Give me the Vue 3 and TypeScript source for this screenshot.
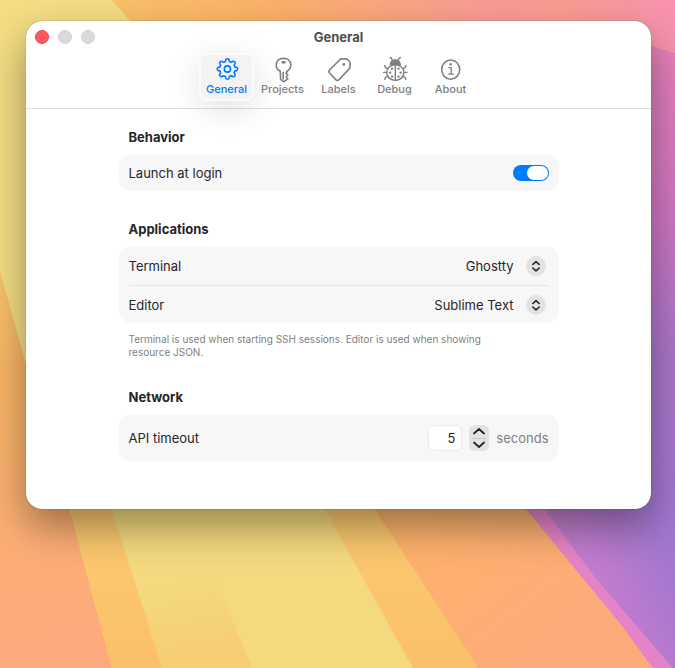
<script setup lang="ts">
import { ref } from 'vue'

type TabId = 'general' | 'projects' | 'labels' | 'debug' | 'about'

const tabs: { id: TabId; label: string }[] = [
  { id: 'general', label: 'General' },
  { id: 'projects', label: 'Projects' },
  { id: 'labels', label: 'Labels' },
  { id: 'debug', label: 'Debug' },
  { id: 'about', label: 'About' },
]

const activeTab = ref<TabId>('general')
const launchAtLogin = ref(true)
const terminal = ref('Ghostty')
const editor = ref('Sublime Text')
const timeout = ref(5)

const terminals = ['Ghostty', 'Terminal', 'iTerm']
const editors = ['Sublime Text', 'TextEdit', 'Xcode']

function step(delta: number) {
  timeout.value = Math.max(1, Number(timeout.value) + delta)
}

// Eight rounded teeth around the centre of a 28-unit icon box.
function gearPath(): string {
  const cx = 14.4
  const cy = 14
  const point = (radius: number, deg: number) => {
    const a = ((deg - 90) * Math.PI) / 180
    return `${(cx + radius * Math.cos(a)).toFixed(2)} ${(cy + radius * Math.sin(a)).toFixed(2)}`
  }
  let d = ''
  for (let i = 0; i < 8; i++) {
    const t = i * 45
    d += `${i === 0 ? 'M' : 'L'}${point(7.9, t - 14)}`
    d += `L${point(9.4, t - 10)}Q${point(10.2, t - 7)} ${point(10.2, t)}`
    d += `Q${point(10.2, t + 7)} ${point(9.4, t + 10)}L${point(7.9, t + 14)}`
    d += `Q${point(7.3, t + 22.5)} ${point(7.9, t + 31)}`
  }
  return d + 'Z'
}
const gear = gearPath()
</script>

<template>
  <div class="desktop">
    <svg class="wallpaper" viewBox="0 0 675 668" preserveAspectRatio="none" aria-hidden="true">
      <defs>
        <linearGradient id="top" x1="0" y1="0" x2="1" y2="0">
          <stop offset="0.15" stop-color="#fbc169" />
          <stop offset="0.42" stop-color="#fcb16a" />
          <stop offset="0.72" stop-color="#f99c96" />
          <stop offset="0.84" stop-color="#f99d92" />
          <stop offset="1" stop-color="#f792b0" />
        </linearGradient>
        <linearGradient id="left" gradientUnits="userSpaceOnUse" x1="0" y1="270" x2="60" y2="668">
          <stop offset="0" stop-color="#f8c469" />
          <stop offset="0.25" stop-color="#f9b566" />
          <stop offset="0.6" stop-color="#fcb071" />
          <stop offset="1" stop-color="#fda97f" />
        </linearGradient>
        <linearGradient id="right" gradientUnits="userSpaceOnUse" x1="0" y1="40" x2="0" y2="668">
          <stop offset="0" stop-color="#e681b6" />
          <stop offset="0.25" stop-color="#d277c2" />
          <stop offset="0.5" stop-color="#aa76c9" />
          <stop offset="0.8" stop-color="#a177d0" />
          <stop offset="1" stop-color="#b078d2" />
        </linearGradient>
        <linearGradient id="violet" gradientUnits="userSpaceOnUse" x1="570" y1="590" x2="665" y2="545">
          <stop offset="0" stop-color="#c77dcc" />
          <stop offset="0.4" stop-color="#be7bcd" />
          <stop offset="1" stop-color="#a177d0" />
        </linearGradient>
        <linearGradient id="band" x1="0" y1="0" x2="0" y2="1">
          <stop offset="0" stop-color="#fbcc72" />
          <stop offset="1" stop-color="#fbc069" />
        </linearGradient>
        <linearGradient id="peach" gradientUnits="userSpaceOnUse" x1="430" y1="510" x2="560" y2="668">
          <stop offset="0" stop-color="#fdb36c" />
          <stop offset="1" stop-color="#fdaa7b" />
        </linearGradient>
        <linearGradient id="glow" gradientUnits="userSpaceOnUse" x1="185" y1="580" x2="200" y2="660">
          <stop offset="0" stop-color="#f7cb70" stop-opacity="0" />
          <stop offset="1" stop-color="#f7cb70" stop-opacity="0.85" />
        </linearGradient>
      </defs>
      <rect width="675" height="668" fill="#f4d97f" />
      <path d="M0 0H675V80H0Z" fill="url(#top)" />
      <path d="M0 0H112L138 30V400H26L0 271Z" fill="#f4dd84" />
      <path d="M0 271L26 364V480H62L70 510L112 668H0Z" fill="url(#left)" />
      <path d="M62 480H103L112 510L162 668H112L70 510Z" fill="url(#band)" />
      <path d="M134 580H216L252 668H162Z" fill="url(#glow)" />
      <path d="M308 480H357L375 510L478 668H413L325 510Z" fill="url(#band)" />
      <path d="M357 480H503L527 510L620 623L653 668H478L375 510Z" fill="url(#peach)" />
      <path d="M503 480H600V46L651 46L675 53V668H653L620 623L527 510Z" fill="url(#right)" />
      <path d="M503 480H675V668L595 577L545 510L527 510Z" fill="url(#violet)" />
      <path d="M503 480H523L545 510L595 577L673 668H653L620 623L527 510Z" fill="#e583c8" />
    </svg>

    <main class="window">
      <header class="toolbar">
        <div class="titlebar">
          <div class="lights">
            <button type="button" class="light close" aria-label="Close"></button>
            <button type="button" class="light" aria-label="Minimize" disabled></button>
            <button type="button" class="light" aria-label="Zoom" disabled></button>
          </div>
          <h1>General</h1>
        </div>
        <nav class="tabs">
          <button
            v-for="tab in tabs"
            :key="tab.id"
            type="button"
            class="tab"
            :class="{ active: activeTab === tab.id }"
            @click="activeTab = tab.id"
          >
            <svg class="icon" viewBox="0 0 28 28" aria-hidden="true">
              <template v-if="tab.id === 'general'">
                <path :d="gear" />
                <circle cx="14.4" cy="14" r="3.1" />
              </template>
              <template v-else-if="tab.id === 'projects'">
                <path d="M11.3 16.3C8.8 15.2 7.2 13 7.2 10.1C7.2 6 10.1 3.4 14.5 3.4S21.8 6 21.8 10.1C21.8 12.8 20.3 15.1 17.9 16.3V17L17 18.3L18.9 20L17.1 21.8L18.8 23.6L15 26.8L11.6 24.3Z" />
                <ellipse cx="14.6" cy="7.3" rx="2.4" ry="1.4" class="solid" />
                <path d="M14.2 17.5V24" />
              </template>
              <template v-else-if="tab.id === 'labels'">
                <path d="M14.8 4.7Q15.7 3.9 16.8 3.9H20.6Q21.8 3.9 22.6 4.7L24.2 6.3Q25 7.1 25 8.3V11.8Q25 13 24.2 13.9L14 24.6Q12.4 26.2 10.8 24.6L4.6 18Q3.2 16.4 4.8 14.8Z" />
                <circle cx="18.8" cy="9.4" r="1.4" class="solid" />
              </template>
              <template v-else-if="tab.id === 'debug'">
                <path d="M8.6 10.6C8.6 6.8 10.6 4.2 14.3 4.2S20 6.8 20 10.6Q14.3 8.8 8.6 10.6Z" class="solid" />
                <path d="M11.3 5.4L10.6 3.4L9.2 2.6M17.3 5.4L18 3.4L19.4 2.6" class="thin" />
                <ellipse cx="14.3" cy="17.6" rx="8.6" ry="7.8" class="thin" />
                <path d="M14.3 10V25.5M6.6 13.6L4.5 12.6L3.6 10.4M22 13.6L24.1 12.6L25 10.4M5.7 17.4H2.6M22.9 17.4H26M7 21.4L4.6 22.3L3.8 24.4M21.6 21.4L24 22.3L24.8 24.4" class="thin" />
                <g class="solid">
                  <circle cx="11.1" cy="13.6" r="1.2" />
                  <circle cx="17.5" cy="13.6" r="1.2" />
                  <circle cx="9" cy="17.6" r="1.2" />
                  <circle cx="19.6" cy="17.6" r="1.2" />
                  <circle cx="11.1" cy="21.6" r="1.2" />
                  <circle cx="17.5" cy="21.6" r="1.2" />
                </g>
              </template>
              <template v-else>
                <ellipse cx="13.7" cy="14.6" rx="9" ry="9.6" />
                <circle cx="13.6" cy="9.3" r="1.3" class="solid" />
                <path d="M11.9 12.6H14.2V18.9M11.6 19.1H16.6" class="thin" />
              </template>
            </svg>
            <span>{{ tab.label }}</span>
          </button>
        </nav>
      </header>

      <form class="settings" @submit.prevent>
        <section>
          <h2>Behavior</h2>
          <div class="card">
            <div class="row">
              <label for="launch">Launch at login</label>
              <input id="launch" v-model="launchAtLogin" type="checkbox" role="switch" class="switch" />
            </div>
          </div>
        </section>

        <section>
          <h2>Applications</h2>
          <div class="card">
            <div class="row picker-row">
              <label for="terminal">Terminal</label>
              <div class="picker">
                <select id="terminal" v-model="terminal">
                  <option v-for="name in terminals" :key="name">{{ name }}</option>
                </select>
                <svg class="chevrons" viewBox="0 0 20 20" aria-hidden="true">
                  <circle cx="10" cy="10" r="10" />
                  <path d="M6.8 8.5L10 5.6L13.2 8.5M6.8 12L10 14.9L13.2 12" />
                </svg>
              </div>
            </div>
            <div class="row picker-row">
              <label for="editor">Editor</label>
              <div class="picker">
                <select id="editor" v-model="editor">
                  <option v-for="name in editors" :key="name">{{ name }}</option>
                </select>
                <svg class="chevrons" viewBox="0 0 20 20" aria-hidden="true">
                  <circle cx="10" cy="10" r="10" />
                  <path d="M6.8 8.5L10 5.6L13.2 8.5M6.8 12L10 14.9L13.2 12" />
                </svg>
              </div>
            </div>
          </div>
          <p class="hint">
            Terminal is used when starting SSH sessions. Editor is used when showing resource JSON.
          </p>
        </section>

        <section>
          <h2>Network</h2>
          <div class="card">
            <div class="row tall">
              <label for="timeout">API timeout</label>
              <div class="timeout">
                <input id="timeout" v-model="timeout" type="text" inputmode="numeric" class="number" />
                <div class="stepper">
                  <button type="button" aria-label="Increase" @click="step(1)">
                    <svg viewBox="0 0 14 12" aria-hidden="true"><path d="M2 8.5L7 4L12 8.5" /></svg>
                  </button>
                  <button type="button" aria-label="Decrease" @click="step(-1)">
                    <svg viewBox="0 0 14 12" aria-hidden="true"><path d="M2 3.5L7 8L12 3.5" /></svg>
                  </button>
                </div>
                <span class="unit">seconds</span>
              </div>
            </div>
          </div>
        </section>
      </form>
    </main>
  </div>
</template>

<style>
body {
  margin: 0;
}
</style>

<style scoped>
.desktop {
  position: relative;
  isolation: isolate;
  box-sizing: border-box;
  min-height: 100vh;
  padding: 21px 24px 48px 26px;
  overflow: hidden;
  font-family: Inter, 'Liberation Sans', sans-serif;
  font-size: 13px;
  line-height: 16px;
  color: #262626;
}

.wallpaper {
  position: absolute;
  inset: 0;
  z-index: -1;
  width: 100%;
  height: 100%;
}

.window {
  background: #fff;
  border-radius: 16px;
  box-shadow:
    0 0 1px rgba(0, 0, 0, 0.6),
    0 18px 40px rgba(0, 0, 0, 0.38);
}

.toolbar {
  padding-bottom: 7px;
  border-bottom: 1px solid #e0e0e0;
}

.titlebar {
  display: grid;
  grid-template-columns: 1fr auto 1fr;
  align-items: center;
  height: 32px;
}

.lights {
  display: flex;
  gap: 9px;
  padding-left: 9px;
}

.light {
  box-sizing: border-box;
  width: 14px;
  height: 14px;
  padding: 0;
  border: 1px solid #d0d0d0;
  border-radius: 50%;
  background: #dadada;
}

.light.close {
  border-color: #fb3b43;
  background: #ff5a5f;
}

h1 {
  margin: 0;
  font-size: 13px;
  font-weight: 700;
  color: #4d4d4d;
}

.tabs {
  display: flex;
  justify-content: center;
  gap: 1px;
}

.tab {
  box-sizing: border-box;
  display: flex;
  flex-direction: column;
  align-items: center;
  width: 55px;
  height: 48px;
  padding: 0;
  border: 2px solid transparent;
  border-radius: 8px;
  background: none;
  font: 500 11px/13px Inter, 'Liberation Sans', sans-serif;
  color: #808080;
}

.tab.active {
  border-color: #fbfbfb;
  background: #f3f3f3;
  box-shadow: 0 8px 32px rgba(0, 0, 0, 0.12);
  color: #007aff;
}

.icon {
  flex: none;
  width: 28px;
  height: 28px;
  fill: none;
  stroke: currentColor;
  stroke-width: 1.6;
  stroke-linecap: round;
  stroke-linejoin: round;
}

.icon .thin {
  stroke-width: 1.4;
}

.icon .solid {
  fill: currentColor;
  stroke: none;
}

.settings {
  display: flex;
  flex-direction: column;
  gap: 30px;
  width: min(440px, 100% - 40px);
  margin: 0 auto;
  padding: 20px 0 48px;
}

h2 {
  margin: 0 10px 10px;
  font-size: 13px;
  font-weight: 700;
}

.card {
  padding: 0 10px;
  border-radius: 12px;
  background: #f7f7f7;
}

.row {
  display: flex;
  align-items: center;
  justify-content: space-between;
  min-height: 36px;
}

.picker-row {
  min-height: 38px;
}

.row + .row {
  box-sizing: border-box;
  border-top: 1px solid #e6e6e6;
}

.tall {
  min-height: 46px;
}

.switch {
  appearance: none;
  display: flex;
  box-sizing: border-box;
  width: 36px;
  height: 16px;
  margin: 0;
  padding: 1px;
  border-radius: 8px;
  background: #c8c8c8;
}

.switch::before {
  content: '';
  width: 21px;
  height: 14px;
  border-radius: 7px;
  background: #fff;
}

.switch:checked {
  justify-content: flex-end;
  background: #007aff;
}

.picker {
  display: grid;
  align-items: center;
  margin-right: 3px;
}

.picker > * {
  grid-area: 1 / 1;
}

select {
  appearance: none;
  height: 20px;
  padding: 0 32px 0 0;
  border: 0;
  background: none;
  font: inherit;
  color: inherit;
  text-align-last: right;
}

.chevrons {
  justify-self: end;
  width: 20px;
  height: 20px;
  pointer-events: none;
  fill: #e3e3e3;
}

.chevrons path {
  fill: none;
  stroke: #262626;
  stroke-width: 1.6;
  stroke-linecap: round;
  stroke-linejoin: round;
}

.hint {
  margin: 10px 60px 0 10px;
  font-size: 10px;
  line-height: 13px;
  color: #7f7f7f;
}

.timeout {
  display: flex;
  align-items: center;
  gap: 7px;
}

.number {
  box-sizing: border-box;
  width: 34px;
  height: 26px;
  padding: 0 6px;
  border: 1px solid #ebebeb;
  border-radius: 6px;
  background: #fff;
  font: inherit;
  color: inherit;
  text-align: right;
}

.stepper {
  display: flex;
  flex-direction: column;
  width: 20px;
  height: 26px;
  border-radius: 6px;
  background: #e3e3e3;
}

.stepper button {
  display: flex;
  flex: 1;
  align-items: center;
  justify-content: center;
  margin: 0 3px;
  padding: 0;
  border: 0;
  background: none;
}

.stepper button + button {
  border-top: 1px solid #cbcbcb;
}

.stepper svg {
  width: 14px;
  height: 12px;
  fill: none;
  stroke: #262626;
  stroke-width: 1.8;
  stroke-linecap: round;
  stroke-linejoin: round;
}

.unit {
  color: #7f7f7f;
}
</style>
